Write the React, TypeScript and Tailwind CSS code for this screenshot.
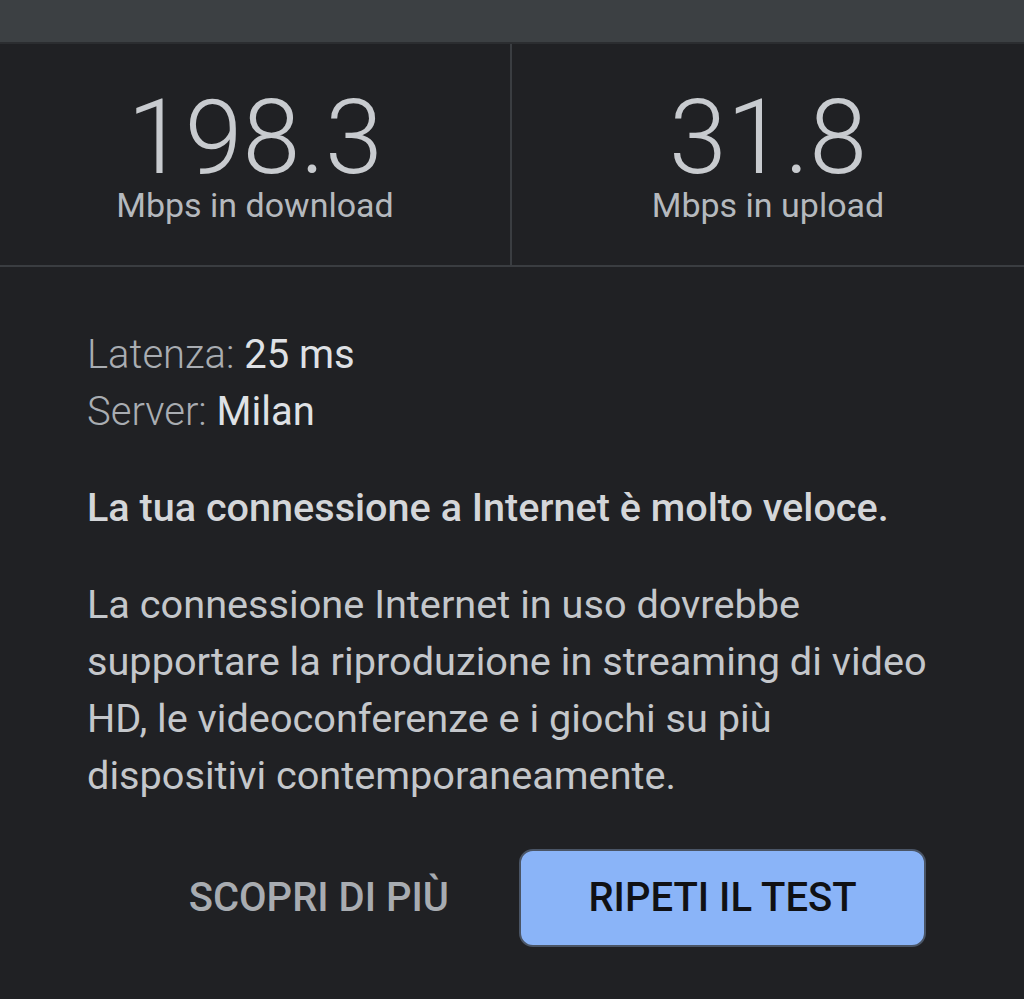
export default function App() {
  const stats = [
    { value: "198.3", label: "Mbps in download" },
    { value: "31.8", label: "Mbps in upload" },
  ];

  return (
    <div
      className="min-h-[999px] w-full bg-[#202124]"
      style={{ fontFamily: "Roboto, 'Noto Sans', sans-serif" }}
    >
      {/* Top bar */}
      <div className="h-[42px] bg-[#3c4043]" />
      <div className="h-[2px] bg-[#2b2d30]" />

      {/* Speed results */}
      <div className="grid grid-cols-2 border-b-2 border-[#3a3d41]">
        {stats.map((s, i) => (
          <div
            key={s.label}
            className={`flex h-[221px] flex-col items-center pt-[44px] ${
              i === 0 ? "border-r-2 border-[#3a3d41]" : ""
            }`}
          >
            <div className="text-[104px] font-light leading-[100px] text-[#c8cbcf]">
              {s.value}
            </div>
            <div className="text-[34px] leading-[34px] text-[#b5b9be]">
              {s.label}
            </div>
          </div>
        ))}
      </div>

      {/* Details */}
      <div className="px-[87px] pt-[59px]">
        <div className="text-[40px] leading-[57px]">
          <div>
            <span className="font-light text-[#a9adb2]">Latenza: </span>
            <span className="text-[#dfe1e5]">25 ms</span>
          </div>
          <div>
            <span className="font-light text-[#a9adb2]">Server: </span>
            <span className="text-[#dfe1e5]">Milan</span>
          </div>
        </div>

        <p className="mt-[39px] text-[39.6px] font-medium leading-[57px] text-[#d4d6d9]">
          La tua connessione a Internet è molto veloce.
        </p>

        <p className="mt-[40px] text-[39.7px] leading-[57px] text-[#c4c7cb]">
          La connessione Internet in uso dovrebbe supportare la riproduzione in
          streaming di video HD, le videoconferenze e i giochi su più
          dispositivi contemporaneamente.
        </p>
      </div>

      {/* Actions */}
      <div className="mt-[45px] flex items-center justify-end gap-[70px] pr-[98px]">
        <button className="text-[40px] font-medium text-[#a8acb1]">
          SCOPRI DI PIÙ
        </button>
        <button className="flex h-[98px] w-[407px] items-center justify-center rounded-[14px] border-2 border-[#4a5566] bg-[#8ab4f8] text-[40px] font-medium text-[#101114]">
          RIPETI IL TEST
        </button>
      </div>
    </div>
  );
}
